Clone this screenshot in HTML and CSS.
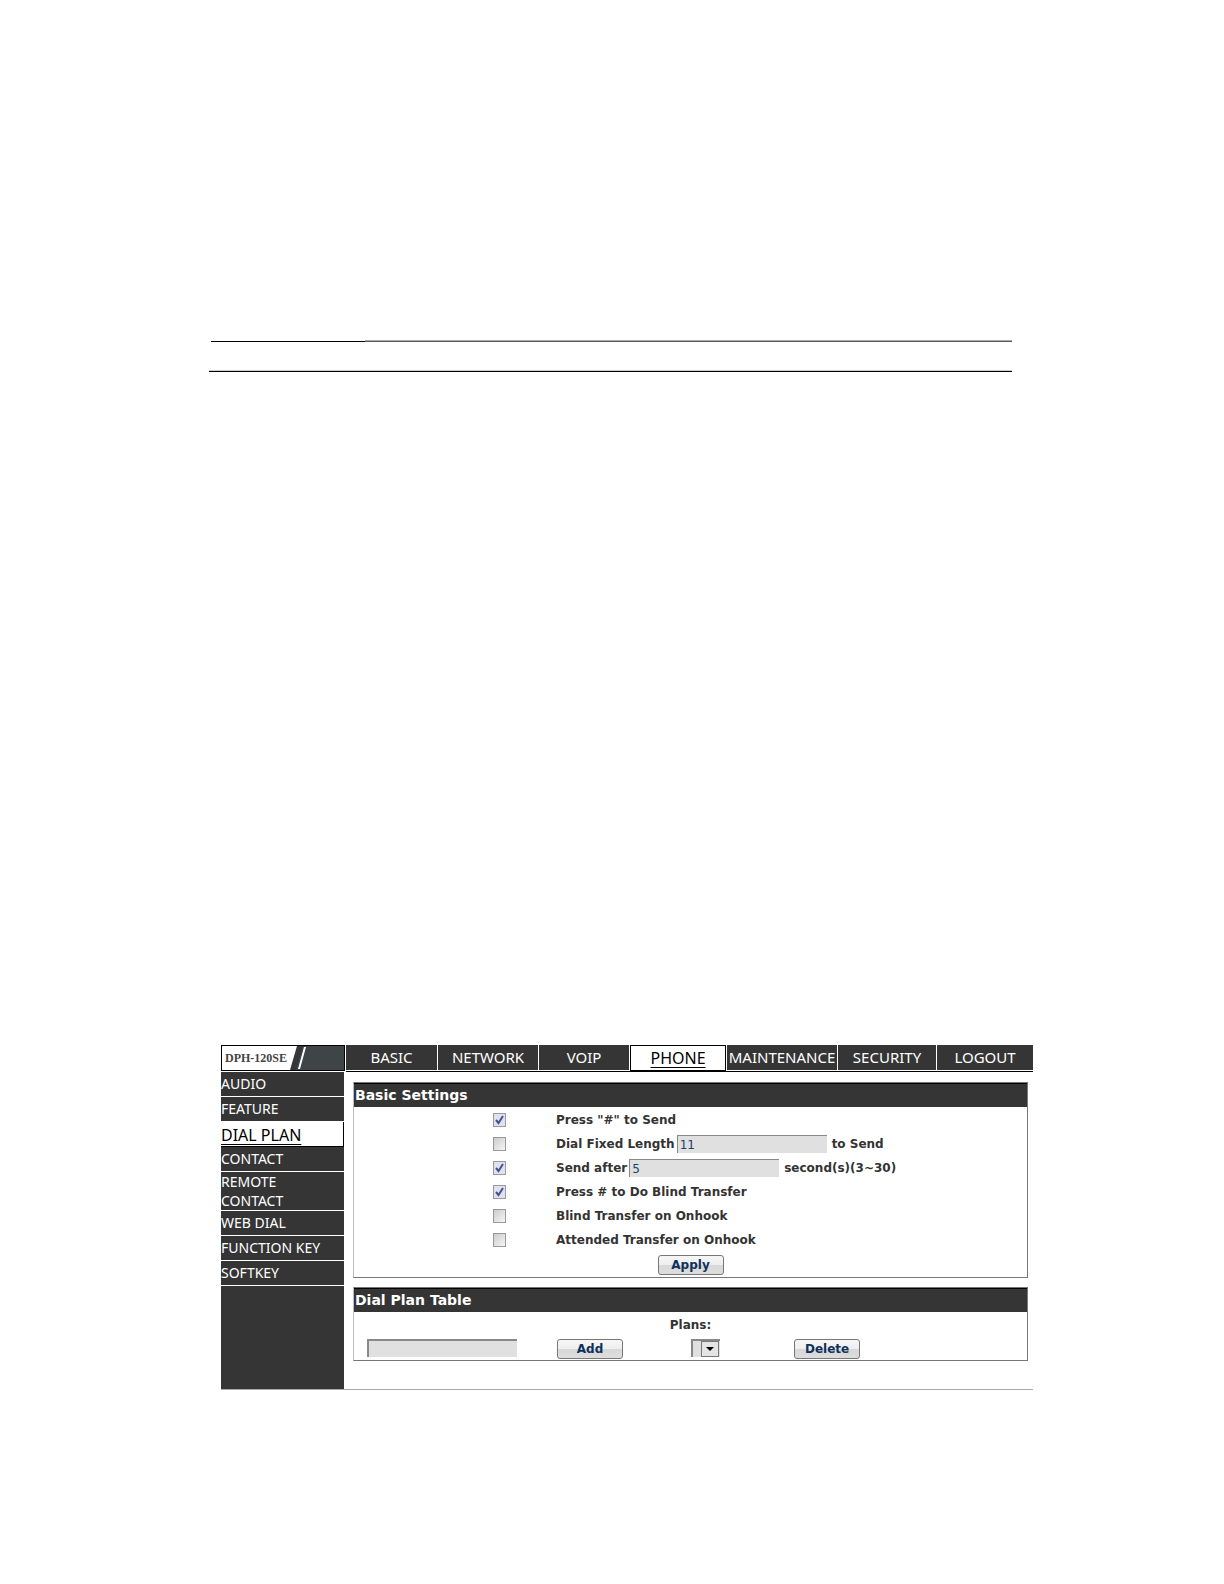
FILE: index.html
```html
<!DOCTYPE html>
<html lang="en">
<head>
<meta charset="utf-8">
<title>DPH-120SE - Dial Plan</title>
<link rel="stylesheet" href="styles.css">
</head>
<body>
<header class="page-rules">
  <div class="rule-top"><span class="rule-dark"></span><span class="rule-gray"></span></div>
  <div class="rule-bottom"></div>
</header>
<div class="app">
  <div class="topbar">
    <div class="logo">
      <span class="logo-text">DPH-120SE</span>
      <svg class="logo-art" viewBox="0 0 54 24" preserveAspectRatio="none" aria-hidden="true">
        <path d="M7 0H54V24H0Z" fill="#34373a"/>
        <path d="M13 0H54V24H6Z" fill="#3f4447"/>
        <path d="M14 1H16L10 23H8Z" fill="#fff"/>
      </svg>
    </div>
    <nav class="tabs">
      <a href="#">BASIC</a>
      <a href="#">NETWORK</a>
      <a href="#">VOIP</a>
      <a href="#" class="active">PHONE</a>
      <a href="#">MAINTENANCE</a>
      <a href="#">SECURITY</a>
      <a href="#">LOGOUT</a>
    </nav>
  </div>
  <div class="body">
    <nav class="side">
      <a href="#">AUDIO</a>
      <a href="#">FEATURE</a>
      <a href="#" class="active">DIAL PLAN</a>
      <a href="#">CONTACT</a>
      <a href="#" class="double">REMOTE<br>CONTACT</a>
      <a href="#">WEB DIAL</a>
      <a href="#">FUNCTION KEY</a>
      <a href="#">SOFTKEY</a>
    </nav>
    <main class="content">
      <section class="panel">
        <h2>Basic Settings</h2>
        <form class="settings">
          <div class="row"><input type="checkbox" id="hash" checked><label for="hash">Press "#" to Send</label></div>
          <div class="row"><input type="checkbox" id="fixed"><div class="field"><label for="fixed">Dial Fixed Length</label><input type="text" class="text" aria-label="Fixed length" value="11"><span class="unit">to Send</span></div></div>
          <div class="row"><input type="checkbox" id="after" checked><div class="field"><label for="after">Send after</label><input type="text" class="text" aria-label="Send delay in seconds" value="5"><span class="unit">second(s)(3~30)</span></div></div>
          <div class="row"><input type="checkbox" id="blind" checked><label for="blind">Press # to Do Blind Transfer</label></div>
          <div class="row"><input type="checkbox" id="blindhook"><label for="blindhook">Blind Transfer on Onhook</label></div>
          <div class="row"><input type="checkbox" id="atthook"><label for="atthook">Attended Transfer on Onhook</label></div>
          <div class="actions"><button type="button">Apply</button></div>
        </form>
      </section>
      <section class="panel">
        <h2>Dial Plan Table</h2>
        <form class="plans">
          <label class="plans-title" for="plans">Plans:</label>
          <div class="plans-row">
            <div><input type="text" class="text" aria-label="New dial plan"></div>
            <div><button type="button">Add</button></div>
            <div class="select-wrap">
              <select id="plans"><option></option></select>
              <svg class="arrow" viewBox="0 0 18 16" aria-hidden="true"><rect x=".5" y=".5" width="17" height="15" fill="#e4e4e4" stroke="#777"/><path d="M5 6H13L9 10Z" fill="#000"/></svg>
            </div>
            <div><button type="button">Delete</button></div>
          </div>
        </form>
      </section>
    </main>
  </div>
</div>
</body>
</html>
```
FILE: styles.css
```css
* { box-sizing: border-box; }

body {
  margin: 0;
  padding: 340px 191px 195px 209px;
  background: #fff;
  color: #333;
  font: bold 12px/24px "DejaVu Sans", Verdana, sans-serif;
}

a { color: inherit; text-decoration: none; }

/* Page header rules */
.page-rules { margin-right: 21px; }
.rule-top { display: flex; align-items: flex-end; margin-left: 2px; }
.rule-dark { width: 154px; height: 1px; background: #000; }
.rule-gray { flex: 1; height: 2px; background: #5a5a5a; border-top: 1px solid #aaa; }
.rule-bottom { height: 2px; margin-top: 28px; background: #000; border-top: 1px solid #ccc; }

/* Application frame */
.app { margin: 673px 0 0 12px; border-bottom: 1px solid #aaa; }
.topbar { display: flex; gap: 1px; height: 27px; }

.logo {
  display: flex;
  width: 124px;
  height: 26px;
  border: 1px solid #000;
  background: #fff;
}
.logo-text {
  flex: 1;
  min-width: 0;
  padding-left: 3px;
  color: #444;
  font: bold 12px/25px "Liberation Serif", "Times New Roman", serif;
  white-space: nowrap;
}
.logo-art { flex: none; width: 54px; height: 24px; }

.tabs {
  display: grid;
  grid-template-columns: 91fr 100fr 90fr 96fr 110fr 98fr 96fr;
  gap: 1px;
  flex: 1;
  border-bottom: 1px solid #000;
}
.tabs a, .side a {
  background: #353535;
  color: #fff;
  font: 15px/25px "Noto Sans", "Segoe UI", sans-serif;
}
.tabs a { height: 25px; text-align: center; }
.tabs .active, .side .active {
  background: #fff;
  border: 1px solid #000;
  color: #000;
  font-size: 16px;
  text-decoration: underline;
  text-decoration-thickness: 1px;
  text-underline-offset: 3px;
}
.tabs .active { height: 26px; }

.body { display: flex; gap: 9px; min-height: 317px; }

.side {
  display: flex;
  flex-direction: column;
  width: 123px;
  background: #353535;
}
.side a {
  height: 25px;
  border-bottom: 1px solid #fff;
  font-size: 14px;
  line-height: 24px;
}
.side .active { border-width: 0 1px 1px 0; border-color: #000; line-height: 26px; }
.side .double { height: 39px; line-height: 19px; }

/* Panels */
.content { flex: 1; padding: 10px 5px 28px 0; }
.panel { border: 1px solid #777; border-left-color: #bbb; }
.panel + .panel { margin-top: 9px; }
.panel h2 {
  height: 24px;
  margin: 0;
  padding-left: 1px;
  background: #353535;
  border-top: 1px solid #000;
  color: #fff;
  font-size: 14px;
  line-height: 22px;
}

.settings, .plans { padding-top: 1px; }
.row { display: grid; grid-template-columns: 202px 1fr; align-items: center; height: 24px; }
.field { display: flex; align-items: center; }
.unit { margin-left: 5px; }

input[type="checkbox"] {
  appearance: none;
  width: 13px;
  height: 14px;
  margin: 0 0 0 139px;
  border: 1px solid #999;
  background: linear-gradient(135deg, #ccc, #f5f5f5);
}
input[type="checkbox"]:checked {
  background: url("data:image/svg+xml,%3Csvg xmlns='http://www.w3.org/2000/svg' viewBox='0 0 11 12'%3E%3Cpath d='M2 6L4.500 9L9 2' fill='none' stroke='%23455290' stroke-width='2'/%3E%3C/svg%3E") center, #dfe2ee;
}

.text {
  width: 150px;
  height: 18px;
  margin: 0;
  padding: 0 2px;
  border: 0 solid #888;
  border-width: 1px 0 0 1px;
  background: #e0e0e0;
  color: #1d4068;
  font: 12px/16px "DejaVu Sans", Verdana, sans-serif;
}
.field .text { margin-left: 2px; }

button {
  min-width: 66px;
  height: 20px;
  padding: 0 10px;
  border: 1px solid #777;
  border-radius: 3px;
  background: linear-gradient(#f6f6f6, #eee 50%, #d8d8d8 51%, #ddd);
  color: #0d315c;
  font: bold 12px/18px "DejaVu Sans", Verdana, sans-serif;
}

.actions { display: flex; justify-content: center; height: 25px; padding-top: 3px; }

.plans-title { display: block; text-align: center; }
.plans-row {
  display: grid;
  grid-template-columns: 190px 134px 103px 1fr;
  height: 23px;
  padding: 2px 0 0 13px;
}
.plans-row > div { display: flex; align-items: flex-start; }
.plans-row .select-wrap { position: relative; }
select {
  appearance: none;
  width: 29px;
  height: 18px;
  border: 0 solid #888;
  border-radius: 0;
  background: #e0e0e0;
}
.plans-row .text, .plans-row select { border-width: 2px 0 0 2px; }
.arrow { position: absolute; left: 10px; top: 2px; width: 18px; height: 16px; pointer-events: none; }
```
